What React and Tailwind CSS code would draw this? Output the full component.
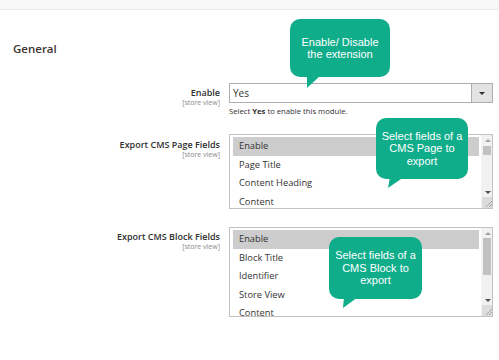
import React from "react";

const font = { fontFamily: '"Open Sans", "Noto Sans", sans-serif' };

function Tooltip({ className, lines, tail }) {
  return (
    <div className={`absolute ${className}`}>
      <div className="relative w-full h-full rounded-[10px] bg-[#10ad8b] flex flex-col items-center justify-center text-white text-[11px] leading-[12.5px] text-center [font-family:'Liberation_Sans',Arial,sans-serif]">
        {lines.map((l, i) => (
          <div key={i}>{l}</div>
        ))}
        <svg className="absolute left-0 top-0 overflow-visible" width="1" height="1">
          <polygon points={tail} fill="#10ad8b" />
        </svg>
      </div>
    </div>
  );
}

function Label({ title, pt }) {
  return (
    <div className={`w-[220px] shrink-0 text-right ${pt}`}>
      <div className="text-[9px] leading-[11px] font-semibold text-[#303030]">{title}</div>
      <div className="text-[7px] leading-[8px] text-[#8a8a8a] mt-[1px]">[store view]</div>
    </div>
  );
}

function ListBox({ items, height, thumbTop, thumbH }) {
  return (
    <div
      className="relative w-[264px] border border-[#c2c2c2] bg-white overflow-hidden"
      style={{ height }}
    >
      <div className="pl-[3px] pt-[2px] pr-[13px]">
        {items.map((it, i) => (
          <div
            key={it}
            className={`h-[18.5px] flex items-center pl-[6px] text-[9.3px] text-[#333] ${
              i === 0 ? "bg-[#cdcdcd]" : ""
            }`}
          >
            {it}
          </div>
        ))}
      </div>
      <div className="absolute right-0 top-0 bottom-0 w-[11px] bg-[#f1f1f1] border-l border-[#f4f4f4]">
        <div className="absolute left-[3px] top-[4px] w-0 h-0 border-l-[3px] border-r-[3px] border-b-[3px] border-l-transparent border-r-transparent border-b-[#a3a3a3]" />
        <div
          className="absolute left-[1px] right-[1px] bg-[#c1c1c1]"
          style={{ top: thumbTop, height: thumbH }}
        />
        <div className="absolute left-[3px] bottom-[14px] w-0 h-0 border-l-[3px] border-r-[3px] border-t-[3px] border-l-transparent border-r-transparent border-t-[#505050]" />
        <div className="absolute left-0 right-0 bottom-0 h-[11px] bg-[#dcdcdc]">
          <svg width="11" height="11" className="absolute left-0 top-0">
            <line x1="4" y1="10" x2="10" y2="4" stroke="#9a9a9a" strokeWidth="0.8" />
            <line x1="7" y1="10" x2="10" y2="7" stroke="#9a9a9a" strokeWidth="0.8" />
          </svg>
        </div>
      </div>
    </div>
  );
}

export default function App() {
  return (
    <div className="relative w-[499px] h-[360px] bg-white overflow-hidden" style={font}>
      <div className="h-[10px] bg-[#f8f8f8] border-b border-[#ececec]" />
      <div className="pl-[13px] mt-[31px] text-[11.5px] leading-[16px] font-semibold text-[#41362f]">
        General
      </div>

      <div className="flex gap-[9px] mt-[26px]">
        <Label title="Enable" pt="pt-[4px]" />
        <div>
          <div className="w-[264px] h-[20px] border border-[#adadad] flex bg-white">
            <div className="flex-1 flex items-center pl-[3px] text-[10px] text-[#333]">Yes</div>
            <div className="w-[21px] bg-[#e3e3e3] border-l border-[#adadad] flex items-center justify-center">
              <div className="w-0 h-0 border-l-[3px] border-r-[3px] border-t-[3px] border-l-transparent border-r-transparent border-t-[#303030]" />
            </div>
          </div>
          <div className="mt-[3px] text-[7.7px] leading-[10px] text-[#303030]">
            Select <span className="font-bold">Yes</span> to enable this module.
          </div>
        </div>
      </div>

      <div className="flex gap-[9px] mt-[18px]">
        <Label title="Export CMS Page Fields" pt="pt-[5px]" />
        <ListBox
          items={["Enable", "Page Title", "Content Heading", "Content"]}
          height={75}
          thumbTop={11}
          thumbH={9}
        />
      </div>

      <div className="flex gap-[9px] mt-[18px]">
        <Label title="Export CMS Block Fields" pt="pt-[4px]" />
        <ListBox
          items={["Enable", "Block Title", "Identifier", "Store View", "Content"]}
          height={90}
          thumbTop={10}
          thumbH={37}
        />
      </div>

      <Tooltip
        className="left-[290px] top-[19px] w-[100px] h-[58px]"
        lines={["Enable/ Disable", "the extension"]}
        tail="17,56 31,56 17,69"
      />
      <Tooltip
        className="left-[376px] top-[118px] w-[92px] h-[61px]"
        lines={["Select fields of a", "CMS Page to", "export"]}
        tail="14,59 28,59 12,70"
      />
      <Tooltip
        className="left-[329px] top-[237px] w-[93px] h-[62px]"
        lines={["Select fields of a", "CMS Block to", "export"]}
        tail="15,60 29,60 14,71"
      />
    </div>
  );
}
